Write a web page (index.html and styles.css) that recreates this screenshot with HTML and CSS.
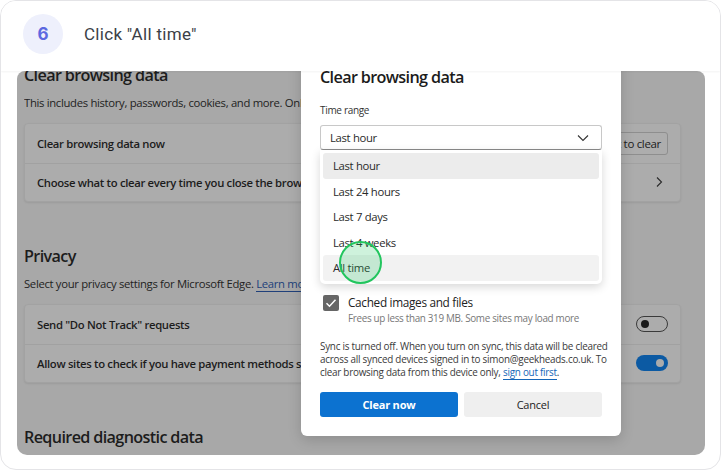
FILE: index.html
```html
<!DOCTYPE html>
<html>
<head>
<meta charset="utf-8">
<link rel="stylesheet" href="styles.css">
</head>
<body>
<div class="frame">
  <div class="header">
    <div class="step">6</div>
    <div class="title">Click "All time"</div>
  </div>
  <div class="shot">
    <div class="page">
      <h2 class="h first">Clear browsing data</h2>
      <p class="desc">This includes history, passwords, cookies, and more. Only data from this profile will be deleted.</p>
      <div class="card">
        <div class="row">
          <span>Clear browsing data now</span>
          <span class="btn">Choose what to clear</span>
        </div>
        <div class="row">
          <span>Choose what to clear every time you close the browser</span>
          <svg class="chev" width="10" height="12" viewBox="0 0 10 12"><path d="M3 1.5l4.5 4.5L3 10.5" fill="none" stroke="#2a2a2a" stroke-width="1.1"/></svg>
        </div>
      </div>
      <h2 class="h privacy">Privacy</h2>
      <p class="desc">Select your privacy settings for Microsoft Edge. <span class="lnk">Learn more about these settings</span></p>
      <div class="card">
        <div class="row">
          <span>Send "Do Not Track" requests</span>
          <span class="tog off"><i></i></span>
        </div>
        <div class="row">
          <span>Allow sites to check if you have payment methods saved</span>
          <span class="tog on"><i></i></span>
        </div>
      </div>
      <h2 class="h diag">Required diagnostic data</h2>
    </div>

    <div class="dialog">
      <div class="dtitle">Clear browsing data</div>
      <div class="label">Time range</div>
      <div class="selwrap">
        <div class="select">
          <span>Last hour</span>
          <svg width="12" height="8" viewBox="0 0 12 8"><path d="M1 1.5l5 5 5-5" fill="none" stroke="#333" stroke-width="1.1"/></svg>
        </div>
        <div class="menu">
          <div class="opt sel">Last hour</div>
          <div class="opt">Last 24 hours</div>
          <div class="opt">Last 7 days</div>
          <div class="opt">Last 4 weeks</div>
          <div class="opt hov">All time</div>
          <div class="click"></div>
        </div>
      </div>
      <div class="list">
        <div class="check">
          <span class="box"><svg width="12" height="10" viewBox="0 0 12 10"><path d="M1.5 5.2l3 3 6-6.5" fill="none" stroke="#fff" stroke-width="1.5"/></svg></span>
          <div>
            <div class="ct">Cached images and files</div>
            <div class="cs">Frees up less than 319 MB. Some sites may load more</div>
          </div>
        </div>
      </div>
      <p class="sync">Sync is turned off. When you turn on sync, this data will be cleared<br>across all synced devices signed in to simon@geekheads.co.uk. To<br>clear browsing data from this device only, <span class="slink">sign out first</span>.</p>
      <div class="actions">
        <button class="primary">Clear now</button>
        <button class="secondary">Cancel</button>
      </div>
    </div>
  </div>
</div>
</body>
</html>
```

FILE: styles.css
```css
* { box-sizing: border-box; }
html, body { margin: 0; padding: 0; background: #fff; }
body { width: 722px; height: 471px; overflow: hidden; }

.frame {
  width: 721px;
  height: 470px;
  border: 1px solid #e4e4e7;
  border-radius: 16px;
  background: #fff;
  display: flex;
  flex-direction: column;
  overflow: hidden;
}

.header {
  height: 70px;
  flex: none;
  display: flex;
  align-items: center;
  padding: 0 0 5px 22px;
  gap: 21px;
  position: relative;
  z-index: 2;
  background: #fff;
  box-shadow: 0 1px 2px rgba(0,0,0,0.05);
}
.step {
  width: 40px; height: 40px;
  border-radius: 50%;
  background: #eef0fc;
  color: #5c68e0;
  font-family: Inter, "Noto Sans", sans-serif;
  font-weight: 700;
  font-size: 17px;
  display: flex; align-items: center; justify-content: center;
}
.title {
  font-family: Roboto, "Noto Sans", sans-serif;
  font-size: 17px;
  color: #3b3f47;
  letter-spacing: 0.3px;
}

.shot {
  position: relative;
  margin: 0 15px 0 16px;
  height: 384px;
  background: #a8a8a8;
  border-radius: 8px 8px 10px 10px;
  overflow: hidden;
  font-family: "Open Sans", "Noto Sans", sans-serif;
  color: #1c1c1c;
  letter-spacing: -0.02em;
}

.page {
  padding: 0 24px 0 7px;
  white-space: nowrap;
}
.h {
  margin: 0;
  font-size: 16.2px;
  font-weight: 600;
  line-height: 22px;
  letter-spacing: -0.04em;
}
.h.first { margin-top: -7px; }
.desc {
  margin: 9px 0 0;
  font-size: 11.3px;
  line-height: 16px;
  color: #222;
  overflow: hidden;
}
.lnk { color: #20407a; border-bottom: 1px solid #20407a; }
.card {
  margin-top: 12px;
  background: #acacac;
  border: 1px solid #a2a2a2;
  border-radius: 4px;
  box-shadow: 0 1px 2px rgba(0,0,0,0.08);
}
.row {
  height: 38.5px;
  display: flex;
  align-items: center;
  justify-content: space-between;
  padding: 0 12px 0 12px;
  font-size: 11.3px;
  font-weight: 600;
}
.row + .row { border-top: 1px solid #a1a1a1; }
.btn {
  border: 1px solid #8e8e8e;
  border-radius: 3px;
  padding: 3px 6px;
  font-weight: 400;
  font-size: 11.5px;
  background: #adadad;
}
.chev { margin-right: 4px; }
.h.privacy { margin-top: 43px; }
.h.diag { margin-top: 43px; }

.tog {
  width: 32px; height: 16px;
  border-radius: 8px;
  display: flex; align-items: center;
}
.tog i { width: 8px; height: 8px; border-radius: 50%; display: block; }
.tog.off { border: 1px solid #3a3a3a; padding-left: 4px; }
.tog.off i { background: #1a1a1a; }
.tog.on { background: #0c5aa3; justify-content: flex-end; padding-right: 4px; }
.tog.on i { background: #ababab; }

.dialog {
  position: absolute;
  left: 284px;
  top: -19px;
  width: 320px;
  height: 384px;
  background: #fff;
  border-radius: 6px;
  box-shadow: 0 4px 14px rgba(0,0,0,0.16);
  padding: 14px 19px 0 19px;
  color: #1b1b1b;
}
.dtitle {
  font-size: 16.2px;
  font-weight: 600;
  line-height: 22px;
  letter-spacing: -0.04em;
}
.label {
  margin-top: 15px;
  font-size: 10px;
  color: #333;
  line-height: 14px;
}
.selwrap { position: relative; margin-top: 8px; }
.select {
  height: 25px;
  border: 1px solid #c8c8c8;
  border-bottom-color: #8a8a8a;
  border-radius: 3px;
  display: flex; align-items: center; justify-content: space-between;
  padding: 0 12px 0 9px;
  font-size: 11.3px;
  color: #2a2a2a;
}
.menu {
  position: absolute;
  left: 0; right: 0; top: 25px;
  height: 134px;
  background: #fff;
  border-radius: 0 0 5px 5px;
  box-shadow: 0 3px 10px rgba(0,0,0,0.16);
  padding: 3px 3px;
  z-index: 3;
}
.opt {
  height: 25.5px;
  display: flex; align-items: center;
  padding-left: 10px;
  font-size: 11.3px;
  color: #2a2a2a;
  border-radius: 3px;
}
.opt.sel { background: #ececec; }
.opt.hov { background: #f2f2f2; }
.click {
  position: absolute;
  left: 19px; top: 91px;
  width: 43px; height: 43px;
  border-radius: 50%;
  border: 2px solid #22c55e;
  background: rgba(34,197,94,0.22);
}
.list { height: 176px; position: relative; }
.check {
  position: absolute;
  left: 3px; bottom: 0;
  display: flex;
  gap: 9px;
}
.box {
  width: 16px; height: 16px;
  background: #666;
  border-radius: 2px;
  display: flex; align-items: center; justify-content: center;
  flex: none;
}
.ct { font-size: 11.8px; line-height: 15px; color: #222; }
.cs { font-size: 9.9px; line-height: 16px; color: #777; }
.sync {
  margin: 14px 0 0;
  font-size: 9.9px;
  line-height: 13px;
  color: #3a3a3a;
  letter-spacing: -0.025em;
  white-space: nowrap;
}
.slink { color: #1466b8; border-bottom: 1px solid #1466b8; }
.actions {
  display: flex;
  gap: 6px;
  margin-top: 13px;
}
.actions button {
  flex: 1;
  height: 25px;
  border: none;
  border-radius: 3px;
  font-family: "Open Sans", "Noto Sans", sans-serif;
  font-size: 11px;
  letter-spacing: -0.02em;
}
.primary { background: #0c72d0; color: #fff; font-weight: 700; }
.secondary { background: #efefef; color: #222; font-weight: 400; }
```
